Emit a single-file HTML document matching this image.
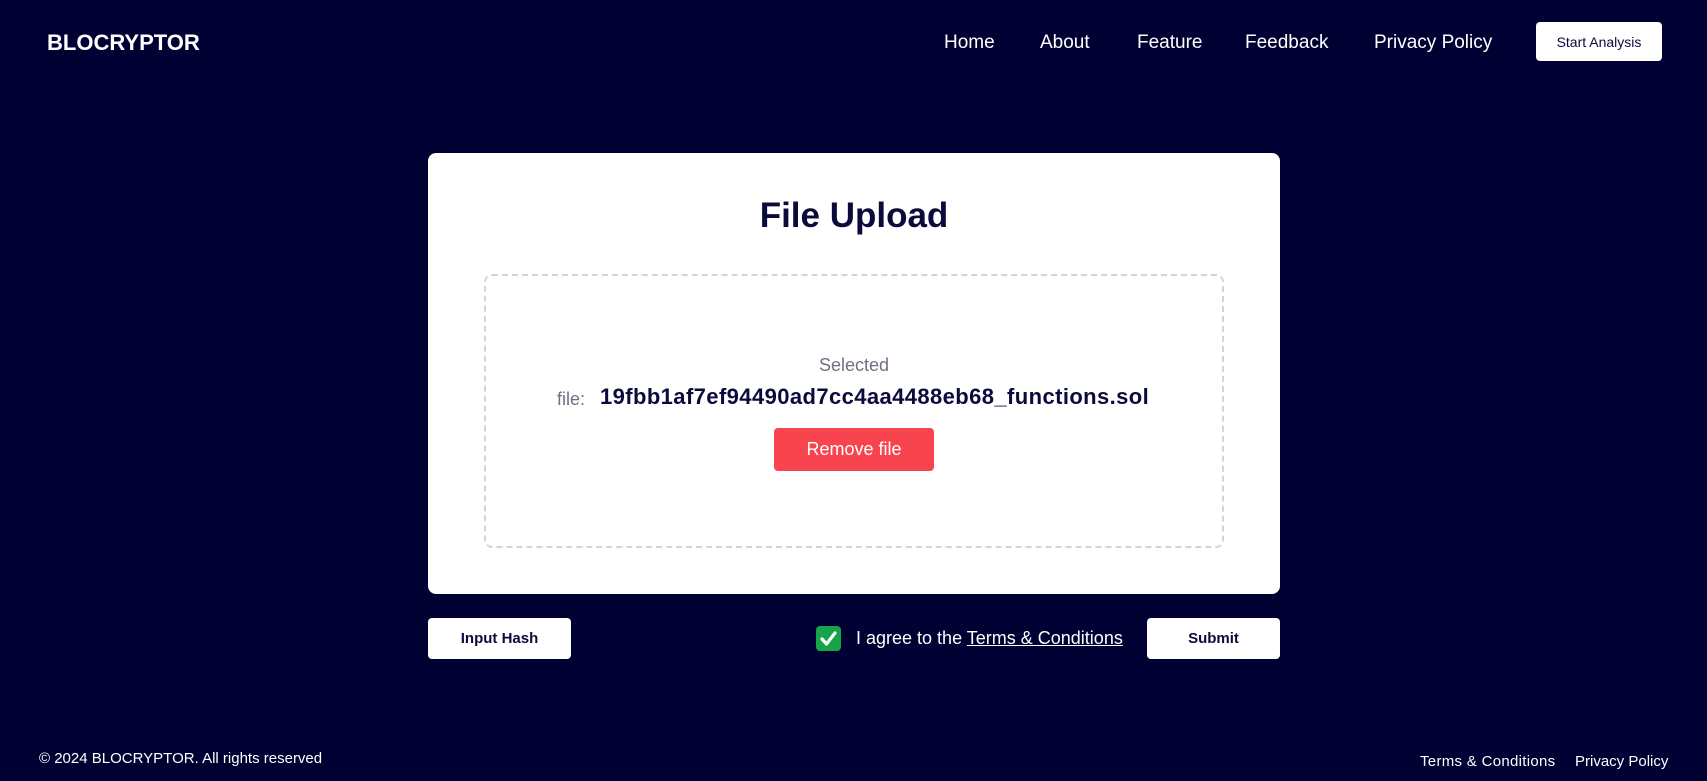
<!DOCTYPE html>
<html><head><meta charset="utf-8"><style>
*{margin:0;padding:0;box-sizing:border-box}
body{width:1707px;height:781px;background:#000033;font-family:"Liberation Sans",sans-serif;position:relative;overflow:hidden;color:#fff}
.abs{position:absolute;white-space:nowrap}
.logo{left:47px;top:30px;font-size:22px;font-weight:bold}
.nav{top:32px;font-size:19px}
.btn{position:absolute;background:#fff;border-radius:4px;color:#0b0b3b;font-weight:bold;font-size:15px;display:flex;align-items:center;justify-content:center}
.card{position:absolute;left:428px;top:153px;width:852px;height:441px;background:#fff;border-radius:8px}
.dash{position:absolute;left:56px;top:121px;width:740px;height:274px;border:2px dashed #d1d5db;border-radius:8px}
</style></head><body>
<div class="abs logo">BLOCRYPTOR</div>
<div class="abs nav" style="left:944px">Home</div>
<div class="abs nav" style="left:1040px">About</div>
<div class="abs nav" style="left:1137px">Feature</div>
<div class="abs nav" style="left:1245px">Feedback</div>
<div class="abs nav" style="left:1374px">Privacy Policy</div>
<div class="btn" style="left:1536px;top:22px;width:126px;height:39px;font-weight:normal;font-size:14px">Start Analysis</div>

<div class="card">
  <div class="abs" style="left:0;width:852px;text-align:center;top:43px;font-size:35px;font-weight:bold;color:#0b0b3b">File Upload</div>
  <div class="dash"></div>
  <div class="abs" style="left:0;width:852px;text-align:center;top:202px;font-size:18px;color:#6b7280">Selected</div>
  <div class="abs" style="left:129px;top:236px;font-size:18px;color:#6b7280">file:</div>
  <div class="abs" style="left:172px;top:231px;font-size:22px;font-weight:bold;color:#0b0b3b;letter-spacing:0.4px">19fbb1af7ef94490ad7cc4aa4488eb68_functions.sol</div>
  <div class="abs" style="left:346px;top:275px;width:160px;height:43px;background:#f8444f;border-radius:4px;color:#fff;font-size:18px;display:flex;align-items:center;justify-content:center">Remove file</div>
</div>

<div class="btn" style="left:428px;top:618px;width:143px;height:41px">Input Hash</div>
<div class="abs" style="left:816px;top:626px;width:25px;height:25px;background:#16a34a;border-radius:4px">
<svg width="25" height="25" viewBox="0 0 25 25"><path d="M6 13l4.5 5L19 7" stroke="#fff" stroke-width="3.2" fill="none" stroke-linecap="round" stroke-linejoin="round"/></svg></div>
<div class="abs" style="left:856px;top:628px;font-size:18px">I agree to the <span style="text-decoration:underline">Terms &amp; Conditions</span></div>
<div class="btn" style="left:1147px;top:618px;width:133px;height:41px">Submit</div>

<div class="abs" style="left:39px;top:750px;font-size:15px">© 2024 BLOCRYPTOR. All rights reserved</div>
<div class="abs" style="left:1420px;top:753px;font-size:15px;letter-spacing:0.3px">Terms &amp; Conditions</div>
<div class="abs" style="left:1575px;top:753px;font-size:15px">Privacy Policy</div>
</body></html>
